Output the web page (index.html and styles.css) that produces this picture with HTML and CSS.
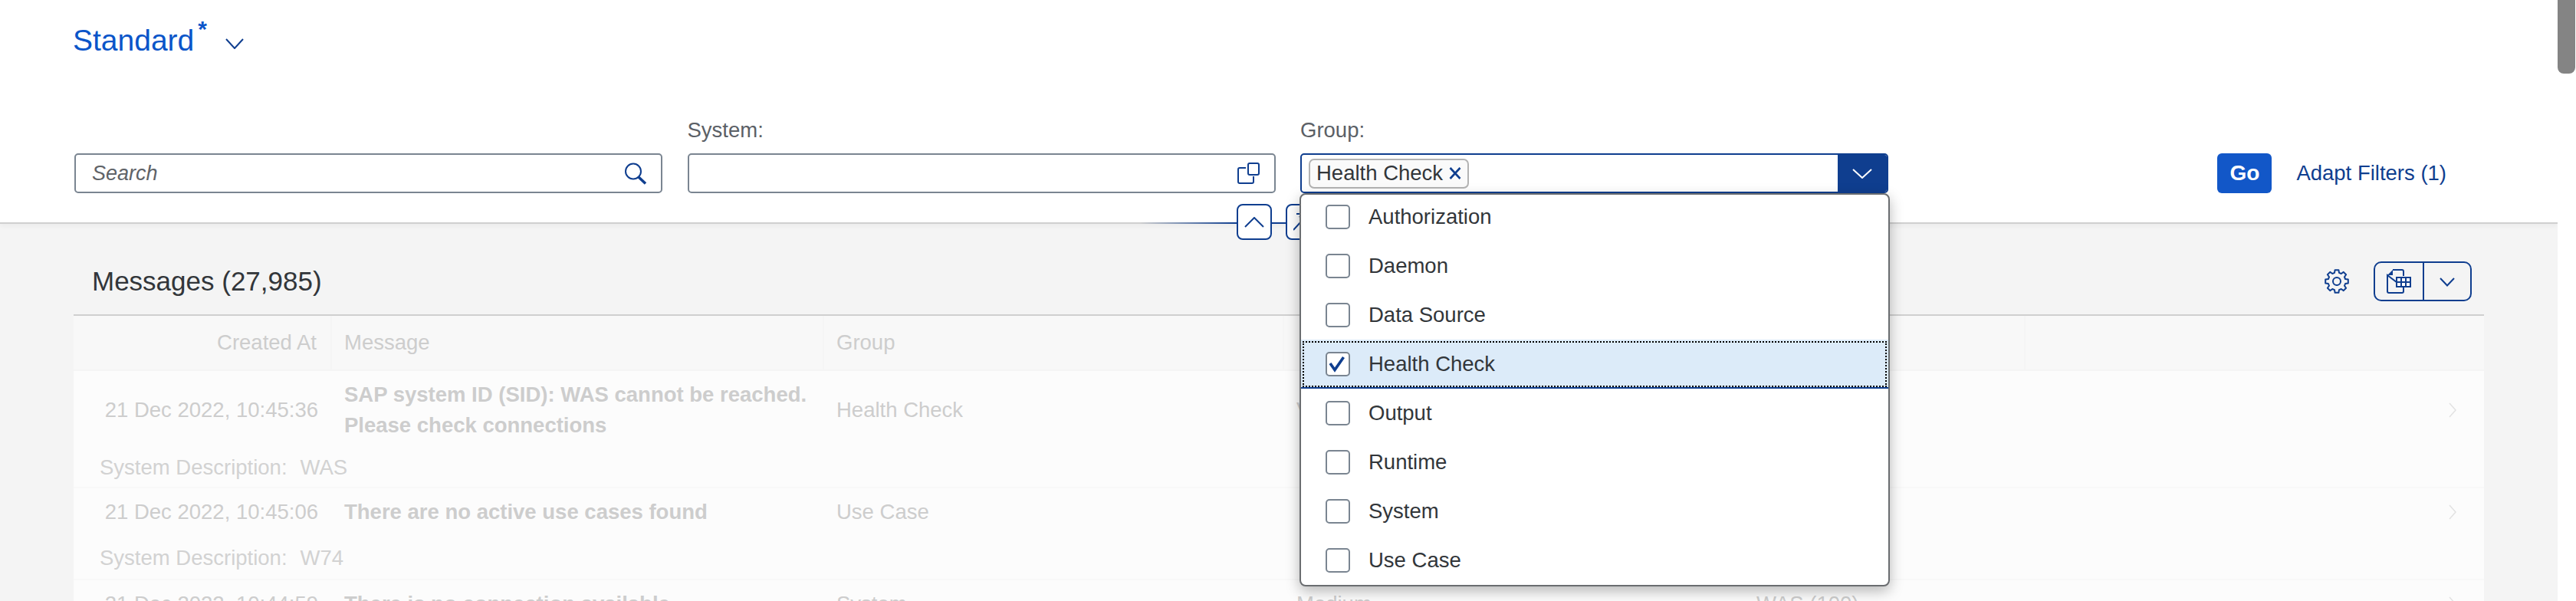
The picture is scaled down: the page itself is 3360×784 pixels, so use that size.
FILE: index.html
```html
<html>
  <head>
    <link rel="stylesheet" href="styles.css">
    <title>Messages</title>
  </head>
  <body>
    <div class="page">
      <div class="header">
        <div class="variant">
          <span class="variant-name">Standard</span><span class="variant-star">*</span>
          <svg class="variant-arrow" width="24" height="14" viewBox="0 0 24 14"><path d="M1 1 L12 13 L23 1" fill="none" stroke="#0f3e8f" stroke-width="2"/></svg>
        </div>

        <div class="filters">
          <div class="filter">
            <div class="field">
              <span class="placeholder">Search</span>
              <svg width="30" height="29" viewBox="0 0 30 29"><circle cx="12" cy="11.5" r="10" fill="none" stroke="#0f3e8f" stroke-width="2"/><path d="M19 19 L28 27.5" stroke="#0f3e8f" stroke-width="3.5"/></svg>
            </div>
          </div>

          <div class="filter">
            <label class="filter-label">System:</label>
            <div class="field">
              <span></span>
              <svg width="30" height="28" viewBox="0 0 30 28" fill="none" stroke="#0f3e8f" stroke-width="2"><rect x="14" y="1" width="14" height="15" rx="2"/><path d="M11 7 H3 a2 2 0 0 0 -2 2 V25 a2 2 0 0 0 2 2 H19 a2 2 0 0 0 2 -2 V18"/></svg>
            </div>
          </div>

          <div class="filter filter-open">
            <label class="filter-label">Group:</label>
            <div class="field field-focus">
              <span class="token">Health Check
                <svg width="16" height="16" viewBox="0 0 16 16"><path d="M1.5 1 L14.5 15 M14.5 1 L1.5 15" stroke="#0f3e8f" stroke-width="2.6"/></svg>
              </span>
              <span class="field-arrow">
                <svg width="26" height="13" viewBox="0 0 26 13"><path d="M1 1 L13 12 L25 1" fill="none" stroke="#fff" stroke-width="2"/></svg>
              </span>
            </div>

            <ul class="popover">
              <li class="option"><span class="check"></span>Authorization</li>
              <li class="option"><span class="check"></span>Daemon</li>
              <li class="option"><span class="check"></span>Data Source</li>
              <li class="option option-selected">
                <span class="check">
                  <svg width="28" height="28" viewBox="0 0 28 28"><path d="M4 13 L10 21.5 L21.5 5" fill="none" stroke="#0f3e8f" stroke-width="3.6"/></svg>
                </span>Health Check
              </li>
              <li class="option"><span class="check"></span>Output</li>
              <li class="option"><span class="check"></span>Runtime</li>
              <li class="option"><span class="check"></span>System</li>
              <li class="option"><span class="check"></span>Use Case</li>
            </ul>
          </div>

          <div class="filter-actions">
            <button class="go">Go</button>
            <a class="adapt">Adapt Filters (1)</a>
          </div>
        </div>

        <!-- the collapse / pin buttons sit on the header border -->
        <div class="toggle-line"></div>
        <div class="toggles">
          <span class="toggle">
            <svg width="26" height="14" viewBox="0 0 26 14"><path d="M1 13 L13 1 L25 13" fill="none" stroke="#0f3e8f" stroke-width="2"/></svg>
          </span>
          <span class="toggle">
            <svg width="26" height="24" viewBox="0 0 26 24"><path d="M0 22 L12 9 M4 1 H18 M8 4 L18 16" fill="none" stroke="#0f3e8f" stroke-width="2"/></svg>
          </span>
        </div>
      </div>

      <div class="content">
        <div class="panel">
          <div class="toolbar">
            <span class="panel-title">Messages (27,985)</span>
            <div class="toolbar-actions">
              <svg width="32" height="32" viewBox="0 0 32 32" fill="none" stroke="#0f3e8f" stroke-width="2" stroke-linejoin="round"><path d="M13 4.9 L13.6 1.2 L18.4 1.2 L19 4.9 L21.8 6 L24.8 3.9 L28.1 7.2 L26 10.3 L27.1 13 L30.8 13.6 L30.8 18.4 L27.1 19 L26 21.8 L28.1 24.8 L24.8 28.1 L21.8 26 L19 27.1 L18.4 30.8 L13.6 30.8 L13 27.1 L10.3 26 L7.2 28.1 L3.9 24.8 L6 21.8 L4.9 19 L1.2 18.4 L1.2 13.6 L4.9 13 L6 10.3 L3.9 7.2 L7.2 3.9 L10.3 6 Z"/><circle cx="16" cy="16" r="5"/></svg>
              <div class="segment">
                <span class="segment-main">
                  <svg width="32" height="32" viewBox="0 0 32 32"><path d="M8 1 H20 a2 2 0 0 1 2 2 V9 M22 24 V29 a2 2 0 0 1 -2 2 H3 a2 2 0 0 1 -2 -2 V8 Z" fill="none" stroke="#0f3e8f" stroke-width="2"/><path d="M8 1 L1 8 H8 Z" fill="#0f3e8f"/><rect x="13" y="11" width="18" height="12" fill="#fff" stroke="#0f3e8f" stroke-width="2"/><path d="M19 11 V23 M25 11 V23 M13 17 H31" stroke="#0f3e8f" stroke-width="2"/></svg>
                </span>
                <span class="segment-arrow">
                  <svg width="20" height="12" viewBox="0 0 20 12"><path d="M1 1 L10 10.5 L19 1" fill="none" stroke="#0f3e8f" stroke-width="2"/></svg>
                </span>
              </div>
            </div>
          </div>

          <div class="table">
            <div class="cols head">
              <div class="cell cell-date cell-sep">Created At</div>
              <div class="cell cell-sep">Message</div>
              <div class="cell cell-sep">Group</div>
              <div class="cell"></div>
              <div class="cell cell-sep"></div>
              <div class="cell"></div>
            </div>

            <div class="row">
              <div class="cols">
                <div class="cell cell-date">21 Dec 2022, 10:45:36</div>
                <div class="cell cell-msg">SAP system ID (SID): WAS cannot be reached. Please check connections</div>
                <div class="cell">Health Check</div>
                <div class="cell">Very High</div>
                <div class="cell"></div>
                <div class="cell cell-nav"><svg width="10" height="20" viewBox="0 0 10 20"><path d="M1 1 L9 10 L1 19" fill="none" stroke="#e2e2e2" stroke-width="1.5"/></svg></div>
              </div>
              <div class="desc"><span>System Description:</span><span>WAS</span></div>
            </div>

            <div class="row row-single">
              <div class="cols">
                <div class="cell cell-date">21 Dec 2022, 10:45:06</div>
                <div class="cell cell-msg">There are no active use cases found</div>
                <div class="cell">Use Case</div>
                <div class="cell"></div>
                <div class="cell"></div>
                <div class="cell cell-nav"><svg width="10" height="20" viewBox="0 0 10 20"><path d="M1 1 L9 10 L1 19" fill="none" stroke="#e2e2e2" stroke-width="1.5"/></svg></div>
              </div>
              <div class="desc"><span>System Description:</span><span>W74</span></div>
            </div>

            <div class="row row-single">
              <div class="cols">
                <div class="cell cell-date">21 Dec 2022, 10:44:59</div>
                <div class="cell cell-msg">There is no connection available</div>
                <div class="cell">System</div>
                <div class="cell">Medium</div>
                <div class="cell">WAS (100)</div>
                <div class="cell cell-nav"><svg width="10" height="20" viewBox="0 0 10 20"><path d="M1 1 L9 10 L1 19" fill="none" stroke="#e2e2e2" stroke-width="1.5"/></svg></div>
              </div>
            </div>
          </div>
        </div>
      </div>
    </div>

    <div class="scrollbar"><div class="scroll-thumb"></div></div>
  </body>
</html>
```

FILE: styles.css
```css
/* Page frame */
body {
    font-family: "Liberation Sans", Arial, sans-serif;
    font-size: 27.5px;
    color: #32363a;
    margin: 0;
    height: 784px;
    overflow: hidden;
    display: flex;
    background-color: #fff;
}

.page {
    flex: 1;
    height: 784px;
    display: flex;
    flex-direction: column;
    overflow: hidden;
}

.scrollbar {
    width: 24px;
    background-color: #fff;
}

.scroll-thumb {
    width: 23px;
    height: 96px;
    background-color: #848484;
    border-radius: 0 0 8px 8px;
}

/* Header with the filter bar */
.header {
    position: relative;
    z-index: 2;
    flex: none;
    height: 292px;
    box-sizing: border-box;
    padding: 26px 145px 0 97px;
    background-color: #fff;
    border-bottom: 2px solid #cfcfcf;
    box-shadow: 0 3px 6px rgba(0, 0, 0, 0.04);
}

.variant {
    display: flex;
    align-items: center;
    height: 54px;
    color: #0a55c9;
}

.variant-name {
    font-size: 39px;
    margin-left: -2px;
}

.variant-star {
    font-size: 30px;
    font-weight: bold;
    align-self: flex-start;
    margin: -5px 0 0 5px;
}

.variant-arrow {
    margin: 8px 0 0 24px;
}

.filters {
    display: flex;
    align-items: flex-end;
    gap: 32.5px;
    margin-top: 72px;
}

.filter {
    position: relative;
    width: 767px;
    flex: none;
}

.filter-label {
    display: block;
    line-height: 36px;
    margin-bottom: 12px;
    color: #5b6066;
}

.field {
    height: 52px;
    box-sizing: border-box;
    display: flex;
    align-items: center;
    justify-content: space-between;
    padding: 0 18px 0 21px;
    border: 2px solid #7a8591;
    border-radius: 5px;
    background-color: #fff;
}

.placeholder {
    font-size: 27px;
    font-style: italic;
    color: #5f6368;
}

.field-focus {
    padding: 0 0 0 9px;
    border-color: #0f3e8f;
    overflow: hidden;
}

.token {
    display: flex;
    align-items: center;
    gap: 8px;
    height: 39px;
    box-sizing: border-box;
    padding: 0 8px;
    border: 2px solid #b3b3b3;
    border-radius: 7px;
    background-color: #fafafa;
    white-space: nowrap;
}

.field-arrow {
    width: 64px;
    height: 52px;
    display: flex;
    align-items: center;
    justify-content: center;
    background-color: #0f3e8f;
}

/* Dropdown list */
.popover {
    position: absolute;
    z-index: 5;
    left: -1px;
    top: 100%;
    width: 770px;
    box-sizing: border-box;
    list-style: none;
    margin: 0;
    padding: 0;
    background-color: #fff;
    border: 2px solid #6a6d70;
    border-radius: 8px;
    box-shadow: 0 6px 18px rgba(0, 0, 0, 0.28);
}

.option {
    height: 64px;
    box-sizing: border-box;
    display: flex;
    align-items: center;
    gap: 24px;
    padding-left: 32px;
}

.option:first-child {
    margin-top: -3px;
}

.option-selected {
    background-color: #dcebf9;
    border-bottom: 2px solid #0f3e8f;
    outline: 2px dotted #000;
    outline-offset: -4px;
    padding-top: 2px;
}

.check {
    width: 32px;
    height: 32px;
    box-sizing: border-box;
    display: flex;
    align-items: center;
    justify-content: center;
    border: 2px solid #7a8591;
    border-radius: 5px;
    background-color: #fff;
}

.filter-actions {
    display: flex;
    align-items: center;
    gap: 32px;
    margin-left: auto;
}

.go {
    width: 71px;
    height: 52px;
    border: 0;
    border-radius: 6px;
    padding: 0;
    font-family: inherit;
    font-size: 28px;
    font-weight: bold;
    color: #fff;
    background-color: #1257c8;
}

.adapt {
    color: #0f3e8f;
    white-space: nowrap;
}

.toggle-line {
    position: absolute;
    left: 1487px;
    top: 290px;
    width: 190px;
    height: 2px;
    background: linear-gradient(to right, transparent, #0f3e8f 66%);
}

.toggles {
    position: absolute;
    left: 1613px;
    top: 266px;
    display: flex;
    gap: 18px;
}

.toggle {
    width: 46px;
    height: 47px;
    box-sizing: border-box;
    display: flex;
    align-items: center;
    justify-content: center;
    border: 2px solid #0f3e8f;
    border-radius: 8px;
    background-color: #fff;
}

/* Table area, dimmed while the list is open */
.content {
    flex: 1;
    padding: 0 96px;
    background-color: #f4f4f4;
}

.toolbar {
    height: 118px;
    box-sizing: border-box;
    display: flex;
    align-items: center;
    justify-content: space-between;
    padding: 49px 16px 17px 24px;
}

.panel-title {
    font-size: 35px;
}

.toolbar-actions {
    display: flex;
    align-items: center;
    gap: 32px;
}

.segment {
    display: flex;
    height: 52px;
    box-sizing: border-box;
    border: 2px solid #0f3e8f;
    border-radius: 10px;
}

.segment-main {
    width: 62px;
    display: flex;
    align-items: center;
    justify-content: center;
    border-right: 2px solid #0f3e8f;
}

.segment-arrow {
    width: 60px;
    display: flex;
    align-items: center;
    justify-content: center;
    padding-top: 2px;
}

.table {
    border-top: 2px solid #cfcfcf;
    color: #cdcdcd;
}

.cols {
    display: grid;
    grid-template-columns: 337px 642px 600px 600px 367px 1fr;
    align-items: center;
}

.head {
    height: 72px;
    align-items: stretch;
    background-color: #f8f8f8;
    border-bottom: 2px solid #f5f5f5;
    box-sizing: border-box;
}

.head .cell {
    display: flex;
    align-items: center;
}

.cell {
    padding: 0 16px;
    box-sizing: border-box;
    line-height: 40px;
    white-space: nowrap;
    min-height: 40px;
}

.cell-sep {
    border-right: 2px solid #f5f5f5;
}

.cell-date {
    text-align: right;
    justify-content: flex-end;
    padding-right: 18px;
}

.cell-msg {
    font-weight: bold;
    white-space: normal;
    padding-right: 20px;
}

.cell-nav {
    text-align: right;
    padding-right: 36px;
    line-height: 0;
    min-height: 0;
}

.row {
    padding-top: 11px;
    height: 153px;
    box-sizing: border-box;
    background-color: #fcfcfc;
    border-bottom: 2px solid #f8f8f8;
}

.row-single {
    height: 120px;
}

.row-single .cols {
    padding-bottom: 5px;
}

.desc {
    display: flex;
    gap: 17px;
    padding-left: 34px;
    margin-top: 15px;
    line-height: 40px;
    color: #d2d2d2;
}
```
